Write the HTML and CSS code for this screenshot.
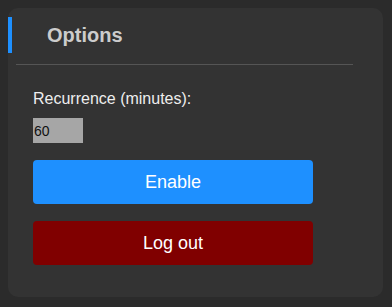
FILE: index.html
```html
<!DOCTYPE html>
<html lang="en">
<head>
    <meta charset="UTF-8">
    <meta name="viewport" content="width=device-width, initial-scale=1.0">
    <title>Options</title>
    <link rel="stylesheet" href="styles.css">
</head>
<body>
    <div class="panel">
        <!-- Header -->
        <h2 class="panel-title">Options</h2>
        <hr class="divider">

        <div class="panel-body">
            <label class="field-label" for="recurrence">Recurrence (minutes):</label>
            <input type="text" id="recurrence" class="field-input" value="60">

            <button class="btn btn-enable">Enable</button>
            <button class="btn btn-logout">Log out</button>
        </div>
    </div>
</body>
</html>
```

FILE: styles.css
```css
body {
    font-family: 'Liberation Sans', Arial, sans-serif;
    background-color: #2b2b2b;
    color: #eeeeee;
    margin: 8px;
}
.panel {
    width: 375px;
    background-color: #333333;
    border-radius: 10px;
    padding: 9px 0 32px 0;
    box-sizing: border-box;
}
.panel-title {
    margin: 0;
    height: 36px;
    line-height: 37px;
    padding-left: 35px;
    border-left: 4px solid #1e90ff;
    font-size: 20px;
    font-weight: bold;
    color: #cccccc;
}
.divider {
    border: none;
    border-top: 1px solid #555555;
    margin: 11px 30px 0 8px;
}
.panel-body {
    display: flex;
    flex-direction: column;
    align-items: flex-start;
    padding: 0 25px;
    margin-top: 25px;
}
.field-label {
    font-size: 16px;
    line-height: 18px;
}
.field-input {
    margin-top: 10px;
    width: 50px;
    height: 25px;
    box-sizing: border-box;
    padding: 0 1px;
    border: none;
    background-color: #a6a6a6;
    color: #111111;
    font-family: 'Liberation Sans', Arial, sans-serif;
    font-size: 14px;
}
.btn {
    width: 280px;
    height: 44px;
    border: none;
    border-radius: 4px;
    color: white;
    font-family: 'Liberation Sans', Arial, sans-serif;
    font-size: 18px;
    cursor: pointer;
    margin-top: 17px;
}
.btn-enable {
    background-color: #1e90ff;
}
.btn-logout {
    background-color: #800000;
}
```
